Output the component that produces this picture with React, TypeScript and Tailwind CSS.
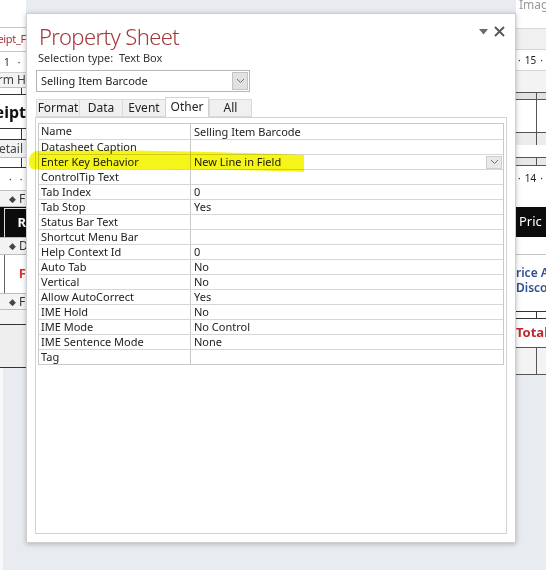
import React from 'react';

const FONT = { fontFamily: '"Noto Sans", "Open Sans", Arial, sans-serif' };

const rows: [string, string][] = [
  ['Name', 'Selling Item Barcode'],
  ['Datasheet Caption', ''],
  ['Enter Key Behavior', 'New Line in Field'],
  ['ControlTip Text', ''],
  ['Tab Index', '0'],
  ['Tab Stop', 'Yes'],
  ['Status Bar Text', ''],
  ['Shortcut Menu Bar', ''],
  ['Help Context Id', '0'],
  ['Auto Tab', 'No'],
  ['Vertical', 'No'],
  ['Allow AutoCorrect', 'Yes'],
  ['IME Hold', 'No'],
  ['IME Mode', 'No Control'],
  ['IME Sentence Mode', 'None'],
  ['Tag', ''],
];

const tabs = ['Format', 'Data', 'Event', 'Other', 'All'];

const Chevron = () => (
  <svg width="9" height="6" viewBox="0 0 9 6">
    <path d="M1 1 L4.5 4.5 L8 1" fill="none" stroke="#707070" strokeWidth="1" />
  </svg>
);

const SectionBar = ({ label, h }: { label: string; h: string }) => (
  <div className={h + ' shrink-0 bg-[#f3f3f3] border-y border-[#bdbdbd] flex items-center gap-[3px] pl-[9px] text-[12px] text-[#333] whitespace-nowrap'}>
    <span className="text-[9px] text-[#444]">◆</span>
    {label}
  </div>
);

// bit of the Access design view showing left of the panel
const LeftStrip = () => (
  <div className="w-[26px] shrink-0 h-full flex flex-col overflow-hidden bg-[#e8ebef]">
    <div className="h-[27px] bg-white shrink-0" />
    <div className="h-[25px] shrink-0 bg-white border-y border-[#c5c5c5] flex items-center justify-end text-[11px] tracking-[-0.3px] text-[#a4373a] whitespace-nowrap">eipt_F</div>
    <div className="h-[21px] shrink-0 bg-white border-b border-[#d0d0d0] flex items-center pl-[4px] gap-[8px] text-[10px] text-[#222]"><span>1</span><span>·</span></div>
    <div className="h-[15px] shrink-0 bg-[#f3f3f3] border-b border-[#bdbdbd] flex items-center justify-end text-[12px] text-[#444] whitespace-nowrap">rm H</div>
    <div className="h-[7px] shrink-0 bg-white border-b border-[#333] flex"><div className="ml-[21px] w-px bg-[#333]" /></div>
    <div className="h-[33px] shrink-0 bg-white flex items-center justify-end text-[16px] font-bold text-[#111] whitespace-nowrap">eipt</div>
    <div className="h-[12px] shrink-0 bg-white border-y border-[#333] flex"><div className="ml-[21px] w-px bg-[#333]" /></div>
    <div className="h-[18px] shrink-0 bg-[#f3f3f3] border-b border-[#bdbdbd] flex items-center justify-end pr-[3px] text-[12px] text-[#444] whitespace-nowrap">etail</div>
    <div className="h-[10px] shrink-0 bg-white border-b border-[#333] flex"><div className="ml-[21px] w-px bg-[#333]" /></div>
    <div className="h-[22px] shrink-0 bg-white flex items-center pl-[9px] gap-[8px] text-[10px] text-[#222]"><span>·</span><span>·</span></div>
    <SectionBar label="F" h="h-[17px]" />
    <div className="h-[30px] shrink-0 bg-[#0c0c0c] pl-[4px] pt-[1px]">
      <div className="h-full border-l border-t border-[#ddd] flex items-center justify-end text-[13px] font-bold text-white">R</div>
    </div>
    <SectionBar label="D" h="h-[18px]" />
    <div className="h-[38px] shrink-0 bg-white flex items-center justify-end">
      <div className="h-full w-px bg-[#666] ml-[4px] mr-auto" />
      <span className="text-[13px] font-bold text-[#e03030]">F</span>
    </div>
    <SectionBar label="F" h="h-[17px]" />
    <div className="h-[15px] shrink-0 bg-[#f3f3f3] border-b border-[#333]" />
    <div className="h-[43px] shrink-0 bg-[#eeeeee] border-b border-[#333]" />
    <div className="flex-1 border-l-[3px] border-[#f8f8f8]" />
  </div>
);

const VLine = ({ x = 'ml-[20px]', c = 'bg-[#555]' }: { x?: string; c?: string }) => (
  <div className={x + ' w-px h-full ' + c} />
);

const RightStrip = () => (
  <div className="w-[30px] shrink-0 h-full flex flex-col overflow-hidden bg-[#e8ebef]">
    <div className="h-[28px] shrink-0 bg-white text-[12px] text-[#999] leading-[10px] pl-[3px] whitespace-nowrap">Image</div>
    <div className="h-[22px] shrink-0 bg-[#f0f0f0] border-y border-[#d6d6d6]" />
    <div className="h-[20px] shrink-0 bg-white flex items-center gap-[4px] pl-[2px] text-[10px] text-[#222] whitespace-nowrap"><span>·</span><span>15</span><span>·</span></div>
    <div className="h-[22px] shrink-0 bg-[#f3f3f3] border-t border-[#d6d6d6]" />
    <div className="h-[8px] shrink-0 bg-[#e2e2e2] border-y border-[#555] flex"><VLine /></div>
    <div className="h-[32px] shrink-0 bg-white flex"><VLine /></div>
    <div className="h-[13px] shrink-0 bg-[#ececec] border-t border-[#555] flex"><VLine /></div>
    <div className="h-[12px] shrink-0 bg-white" />
    <div className="h-[9px] shrink-0 bg-[#e7e7e7] border-y border-[#555] flex"><VLine /></div>
    <div className="h-[24px] shrink-0 bg-white flex items-center gap-[4px] pl-[2px] text-[10px] text-[#222] whitespace-nowrap"><span>·</span><span>14</span><span>·</span></div>
    <div className="h-[17px] shrink-0 bg-white" />
    <div className="h-[30px] shrink-0 bg-[#0c0c0c] flex items-center text-[13px] text-white pl-[3px] whitespace-nowrap">
      Pric
    </div>
    <div className="h-[18px] shrink-0 bg-white border-b border-[#c5c5c5]" />
    <div className="h-[50px] shrink-0 bg-white flex flex-col justify-center gap-[1px] text-[12px] leading-[14px] text-[#2d4f8e] font-semibold whitespace-nowrap">
      <span>rice A</span>
      <span>Disco</span>
    </div>
    <div className="h-[6px] shrink-0 bg-white" />
    <div className="h-[8px] shrink-0 bg-white border-y border-[#333] flex"><VLine x="ml-[20px]" c="bg-[#333]" /></div>
    <div className="h-[29px] shrink-0 bg-white flex items-center text-[13px] font-bold text-[#c0282d] whitespace-nowrap border-b border-[#555]">Total .</div>
    <div className="h-[27px] shrink-0 bg-[#f3f3f3] border-b border-[#555] flex"><VLine /></div>
    <div className="flex-1" />
  </div>
);

export default function App() {
  return (
    <div className="w-[546px] h-[570px] flex bg-[#e8ebef] overflow-hidden relative" style={FONT}>
      <LeftStrip />

      {/* Property Sheet panel */}
      <div className="relative z-10 mt-[13px] w-[490px] h-[530px] shrink-0 bg-white border border-[#cfcfcf] shadow-[0_1px_5px_rgba(0,0,0,0.25)] flex flex-col">
        <div className="flex items-start">
          <h1 className="ml-[12px] mt-[8px] text-[22px] leading-[28px] font-light text-[#a4373a] tracking-[-0.6px]">Property Sheet</h1>
          <div className="ml-auto mr-[10px] mt-[12px] flex items-center gap-[6px] text-[#555]">
            <svg width="9" height="6" viewBox="0 0 9 6"><path d="M0 0 H9 L4.5 5.5 Z" fill="#6b6b6b" /></svg>
            <svg width="11" height="11" viewBox="0 0 11 11"><path d="M1 1 L10 10 M10 1 L1 10" stroke="#555" strokeWidth="1.8" /></svg>
          </div>
        </div>
        <div className="ml-[11px] mt-[1px] text-[11px] leading-[14px] text-[#333]">
          Selection type:&nbsp; Text Box
        </div>

        <div className="ml-[9px] mt-[5px] w-[214px] h-[22px] border border-[#b5b5b5] flex items-center">
          <span className="pl-[4px] text-[11px] text-[#222] flex-1">Selling Item Barcode</span>
          <div className="mr-[1px] w-[16px] h-[18px] bg-[#e1e1e1] border border-[#c3c3c3] flex items-center justify-center">
            <Chevron />
          </div>
        </div>

        <div className="ml-[9px] mt-[5px] flex items-end h-[20px]">
          {tabs.map(t => (
            <div
              key={t}
              className={
                t === 'Other'
                  ? 'h-[20px] w-[44px] bg-white border border-b-0 border-[#d2d2d2] flex items-start justify-center text-[12px] text-[#222]'
                  : 'h-[18px] w-[43px] bg-[#f0f0f0] border-y border-l border-[#dadada] last:border-r flex items-center justify-center text-[12px] text-[#222]'
              }
            >
              {t}
            </div>
          ))}
        </div>

        <div className="mx-[8px] mb-[8px] flex-1 border border-[#d2d2d2] pt-[5px] px-[2px]">
          <div className="border border-[#c9c9c9]">
            {rows.map(([k, v], i) => (
              <div key={k} className={'flex h-[15px] ' + (i > 0 ? 'border-t border-[#d6d6d6]' : '')}>
                <div className="w-[152px] border-r border-[#c9c9c9] pl-[2px] text-[11px] leading-[14px] text-[#222] whitespace-nowrap">{k}</div>
                <div className="flex-1 flex items-center pl-[3px] text-[11px] leading-[14px] text-[#222] whitespace-nowrap">
                  <span className="flex-1">{v}</span>
                  {k === 'Enter Key Behavior' && (
                    <div className="mr-[1px] w-[16px] h-[13px] bg-[#e8e8e8] border border-[#cfcfcf] flex items-center justify-center">
                      <Chevron />
                    </div>
                  )}
                </div>
              </div>
            ))}
          </div>
        </div>
      </div>

      <RightStrip />

      {/* yellow highlighter stroke */}
      <svg className="absolute left-0 top-0 z-20 pointer-events-none mix-blend-multiply" width="546" height="570" viewBox="0 0 546 570">
        <path
          d="M36 151 C90 149 200 151 304 155 L304 172 C240 169 120 169 33 169 C27 167 27 154 36 151 Z"
          fill="#f5f51a"
        />
      </svg>
    </div>
  );
}
